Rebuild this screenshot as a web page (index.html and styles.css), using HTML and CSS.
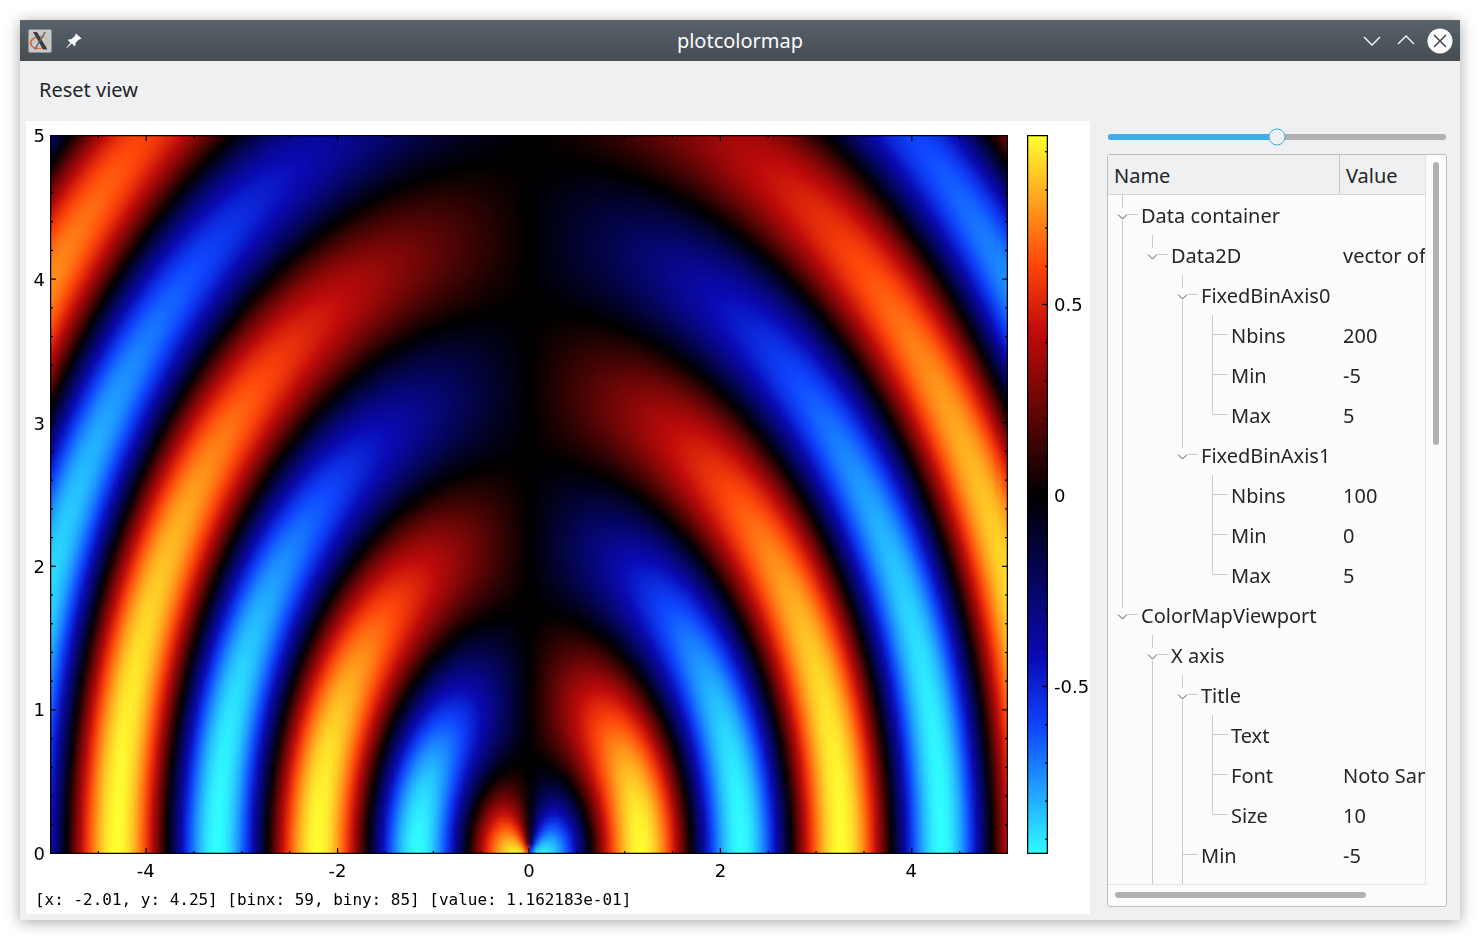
FILE: index.html
```html
<!DOCTYPE html>
<html lang="en">
<head>
<meta charset="utf-8">
<title>plotcolormap</title>
<link rel="stylesheet" href="styles.css">
</head>
<body>
<div class="window">
  <header class="titlebar">
    <div class="title-left">
      <div class="app-icon">
        <svg width="24" height="24" viewBox="0 0 24 24">
          <defs>
            <linearGradient id="ring" x1="0" x2="1" y1="0" y2="0">
              <stop offset="0" stop-color="#e2571a"/>
              <stop offset="0.6" stop-color="#e8853a"/>
              <stop offset="1" stop-color="#d9c49a"/>
            </linearGradient>
          </defs>
          <ellipse cx="11.500" cy="13.500" rx="9" ry="6" fill="none" stroke="url(#ring)" stroke-width="1.500" transform="rotate(-8 11.500 13.500)"/>
          <path d="M5 3h4L19.500 20.500h-4.500z" fill="#3a3f43"/>
          <path d="M16.500 3h1.500L7.500 20.500H6z" fill="#5a5f63"/>
        </svg>
      </div>
      <svg class="pin-icon" width="18" height="18" viewBox="0 0 18 18">
        <path d="M11 1.500l5.500 5-2 1-1 .2-3 3.200.1 2.400-1.200 1-2.600-2.700L2 16l-.5-.5 4-4.700-2.600-2.500 1-1.100 2.400.1 3.400-3 .4-1z" fill="#fcfcfc"/>
      </svg>
    </div>
    <div class="title-text">plotcolormap</div>
    <div class="title-right">
      <svg class="win-btn" width="18" height="18" viewBox="0 0 18 18"><path d="M1 5l8 8 8-8" fill="none" stroke="#fcfcfc" stroke-width="1.300"/></svg>
      <svg class="win-btn" width="18" height="18" viewBox="0 0 18 18"><path d="M1 12l8-8 8 8" fill="none" stroke="#fcfcfc" stroke-width="1.300"/></svg>
      <svg class="close-btn" width="26" height="26" viewBox="0 0 26 26"><circle cx="13" cy="13" r="12.500" fill="#fcfcfc"/><path d="M7 7l12 12M19 7L7 19" stroke="#3c4247" stroke-width="1.500"/></svg>
    </div>
  </header>

  <div class="toolbar">Reset view</div>

  <main class="content">
    <section class="plot-panel">
      <div class="plot-grid">
        <div class="y-labels">
          <span class="y-label" style="top:0%">5</span>
          <span class="y-label" style="top:20%">4</span>
          <span class="y-label" style="top:40%">3</span>
          <span class="y-label" style="top:60%">2</span>
          <span class="y-label" style="top:79.9%">1</span>
          <span class="y-label" style="top:99.9%">0</span>
        </div>
        <canvas id="heatmap" class="heatmap" width="958" height="719"></canvas>
        <div class="bar-gap"></div>
        <div class="colorbar-wrap">
          <canvas id="colorbar" class="colorbar" width="21" height="719"></canvas>
          <span class="bar-label" style="top:23.5%">0.5</span>
          <span class="bar-label" style="top:50.1%">0</span>
          <span class="bar-label" style="top:76.6%">-0.5</span>
        </div>
        <div class="x-labels">
          <span class="x-label" style="left:10%">-4</span>
          <span class="x-label" style="left:30%">-2</span>
          <span class="x-label" style="left:50%">0</span>
          <span class="x-label" style="left:70%">2</span>
          <span class="x-label" style="left:89.9%">4</span>
        </div>
      </div>
      <div class="status">[x: -2.01, y: 4.25] [binx: 59, biny: 85] [value: 1.162183e-01]</div>
    </section>

    <aside class="side-panel">
      <div class="slider">
        <div class="slider-track">
          <div class="slider-fill"></div>
          <div class="slider-thumb"></div>
        </div>
      </div>
      <div class="tree-frame">
        <div class="tree-view">
          <div class="tree-header">
            <div class="head-name">Name</div>
            <div class="head-value">Value</div>
          </div>
          <div class="tree-body">
            <svg class="guides" width="318" height="690" viewBox="1108 195 318 690">
              <path class="guide" d="M1122.500 195V208M1122.500 220V608M1128 214.500H1138M1128 614.500H1138
                M1152.500 235V248M1158 254.500H1168M1152.500 635V648M1152.500 660V885M1158 654.500H1168
                M1182.500 275V288M1182.500 300V448M1188 294.500H1198M1188 454.500H1198M1182.500 675V688M1182.500 700V885M1188 694.500H1198M1183 854.500H1198
                M1212.500 315V414.500M1213 334.500H1228M1213 374.500H1228M1213 414.500H1228
                M1212.500 475V574.500M1213 494.500H1228M1213 534.500H1228M1213 574.500H1228
                M1212.500 715V814.500M1213 734.500H1228M1213 774.500H1228M1213 814.500H1228"/>
              <path class="chevron" d="M1118 214.500l4.500 4.500 4.500-4.500M1118 614.500l4.500 4.500 4.500-4.500M1148 254.500l4.500 4.500 4.500-4.500M1148 654.500l4.500 4.500 4.500-4.500M1178 294.500l4.500 4.500 4.500-4.500M1178 454.500l4.500 4.500 4.500-4.500M1178 694.500l4.500 4.500 4.500-4.500"/>
            </svg>
            <div class="row d0"><div class="cell-name">Data container</div><div class="cell-value"></div></div>
            <div class="row d1"><div class="cell-name">Data2D</div><div class="cell-value">vector of double</div></div>
            <div class="row d2"><div class="cell-name">FixedBinAxis0</div><div class="cell-value"></div></div>
            <div class="row d3"><div class="cell-name">Nbins</div><div class="cell-value">200</div></div>
            <div class="row d3"><div class="cell-name">Min</div><div class="cell-value">-5</div></div>
            <div class="row d3"><div class="cell-name">Max</div><div class="cell-value">5</div></div>
            <div class="row d2"><div class="cell-name">FixedBinAxis1</div><div class="cell-value"></div></div>
            <div class="row d3"><div class="cell-name">Nbins</div><div class="cell-value">100</div></div>
            <div class="row d3"><div class="cell-name">Min</div><div class="cell-value">0</div></div>
            <div class="row d3"><div class="cell-name">Max</div><div class="cell-value">5</div></div>
            <div class="row d0"><div class="cell-name">ColorMapViewport</div><div class="cell-value"></div></div>
            <div class="row d1"><div class="cell-name">X axis</div><div class="cell-value"></div></div>
            <div class="row d2"><div class="cell-name">Title</div><div class="cell-value"></div></div>
            <div class="row d3"><div class="cell-name">Text</div><div class="cell-value"></div></div>
            <div class="row d3"><div class="cell-name">Font</div><div class="cell-value">Noto Sans,10</div></div>
            <div class="row d3"><div class="cell-name">Size</div><div class="cell-value">10</div></div>
            <div class="row d2"><div class="cell-name">Min</div><div class="cell-value">-5</div></div>
          </div>
        </div>
        <div class="vscroll"><div class="vscroll-thumb"></div></div>
        <div class="hscroll"><div class="hscroll-thumb"></div></div>
        <div class="corner"></div>
      </div>
    </aside>
  </main>
</div>
<script src="plot.js"></script>
</body>
</html>
```

FILE: styles.css
```css
* { box-sizing: border-box; }
html, body { margin: 0; height: 100%; }
body {
  background: #fff;
  font-family: "Noto Sans", sans-serif;
  font-size: 20px;
  color: #232629;
  padding: 20px;
}
.window {
  width: 1440px;
  height: 900px;
  background: #eff0f1;
  display: flex;
  flex-direction: column;
  box-shadow: 0 2px 14px rgba(0, 0, 0, 0.35);
}
.titlebar {
  height: 41px;
  flex: none;
  display: grid;
  grid-template-columns: 1fr auto 1fr;
  align-items: center;
  background: linear-gradient(#58626a, #454d53);
  color: #fcfcfc;
}
.title-left { display: flex; align-items: center; padding-left: 8px; gap: 13px; }
.app-icon {
  width: 24px;
  height: 24px;
  background: #c6cacb;
  border: 1px solid #8b9298;
  border-radius: 2px;
  display: flex;
  align-items: center;
  justify-content: center;
}
.app-icon svg { flex: none; }
.pin-icon { display: block; }
.title-text { font-size: 20px; line-height: 41px; }
.title-right { display: flex; align-items: center; justify-content: flex-end; padding-right: 7px; gap: 16px; }
.win-btn { display: block; }
.close-btn { display: block; margin-left: -4px; }

.toolbar {
  height: 60px;
  flex: none;
  padding-left: 19px;
  line-height: 58px;
}

.content { flex: 1; display: flex; min-height: 0; }
.plot-panel {
  width: 1064px;
  height: 793px;
  margin-left: 6px;
  background: #fff;
  padding-top: 14px;
}
.plot-grid {
  display: grid;
  grid-template-columns: 24px 958px 19px 21px;
  grid-template-rows: 719px 36px;
}
.heatmap, .colorbar { display: block; }
.y-labels, .x-labels, .colorbar-wrap { position: relative; }
.y-label, .x-label, .bar-label {
  position: absolute;
  font-family: "DejaVu Sans", sans-serif;
  font-size: 18px;
  line-height: 22px;
  color: #000;
}
.y-label { right: 5px; transform: translateY(calc(-50% + 1px)); }
.x-labels { grid-column: 2; grid-row: 2; }
.x-label { top: 6px; transform: translateX(-50%); }
.bar-label { left: 27px; transform: translateY(calc(-50% + 1px)); white-space: nowrap; }
.status {
  padding-left: 9px;
  padding-top: 1px;
  font-family: "DejaVu Sans Mono", monospace;
  font-size: 16px;
  letter-spacing: -0.015px;
  line-height: 18px;
  color: #000;
}

.side-panel { width: 340px; margin-left: 17px; display: flex; flex-direction: column; }
.slider { height: 33px; flex: none; padding: 0 1px 0 1px; display: flex; align-items: center; }
.slider-track {
  position: relative;
  width: 100%;
  height: 6px;
  margin-bottom: 1px;
  border-radius: 3px;
  background: #b0b1b2;
}
.slider-fill { width: 50%; height: 100%; border-radius: 3px 0 0 3px; background: #3daee9; }
.slider-thumb {
  position: absolute;
  left: 50%;
  top: 50%;
  width: 17px;
  height: 17px;
  transform: translate(-50%, -50%);
  border-radius: 50%;
  background: #eff0f1;
  border: 1px solid #3daee9;
}
.tree-frame {
  width: 340px;
  height: 753px;
  display: grid;
  grid-template-columns: 318px 20px;
  grid-template-rows: 730px 21px;
  background: #fcfcfc;
  border: 1px solid #bcbebf;
  border-radius: 3px;
}
.tree-view {
  display: flex;
  flex-direction: column;
  overflow: hidden;
  border-right: 1px solid #e3e4e5;
  border-bottom: 1px solid #e3e4e5;
}
.tree-header {
  display: flex;
  flex: none;
  height: 40px;
  background: #eff0f1;
  border-bottom: 1px solid #d5d6d7;
}
.head-name { width: 232px; padding-left: 6px; line-height: 42px; border-right: 1px solid #c6c8c9; }
.head-value { flex: 1; padding-left: 6px; line-height: 42px; }
.tree-body { position: relative; flex: 1; overflow: hidden; }
.guides { position: absolute; left: 0; top: 0; }
.guide { fill: none; stroke: #c9cacb; stroke-width: 1; }
.chevron { fill: none; stroke: #4d5154; stroke-width: 1; }
.row { display: flex; height: 40px; line-height: 42px; white-space: nowrap; }
.cell-name { width: 235px; flex: none; }
.d0 .cell-name { padding-left: 33px; }
.d1 .cell-name { padding-left: 63px; }
.d2 .cell-name { padding-left: 93px; }
.d3 .cell-name { padding-left: 123px; }
.cell-value { flex: 1; overflow: hidden; }
.vscroll { position: relative; }
.vscroll-thumb {
  position: absolute;
  left: 7px;
  top: 7px;
  width: 6px;
  height: 283px;
  border-radius: 3px;
  background: #b0b1b2;
}
.hscroll { position: relative; }
.hscroll-thumb {
  position: absolute;
  left: 7px;
  top: 7px;
  width: 251px;
  height: 6px;
  border-radius: 3px;
  background: #b0b1b2;
}
```

FILE: plot.js
```js
var STOPS_POS = [[0, 0, 0, 0], [0.45, 190, 10, 10], [0.64, 255, 70, 10], [1, 255, 255, 50]];
var STOPS_NEG = [[0, 0, 0, 0], [0.45, 10, 10, 180], [0.64, 15, 70, 255], [1, 50, 255, 255]];
var RANGE = 0.9428;

function colour(v) {
  var t = Math.min(1, Math.abs(v) / RANGE);
  var stops = v >= 0 ? STOPS_POS : STOPS_NEG;
  for (var i = 1; i < stops.length; i++) {
    if (t <= stops[i][0]) {
      var a = stops[i - 1], b = stops[i];
      var f = (t - a[0]) / (b[0] - a[0]);
      return [a[1] + (b[1] - a[1]) * f, a[2] + (b[2] - a[2]) * f, a[3] + (b[3] - a[3]) * f];
    }
  }
  return stops[stops.length - 1].slice(1);
}

function field(x, y) {
  var r = 3 * Math.sqrt(x * x + y * y) + 1e-2;
  return 2 * x * (Math.cos(r + 2) / r - Math.sin(r + 2) / r);
}

function fillBins(w, h, fn) {
  var c = document.createElement("canvas");
  c.width = w;
  c.height = h;
  var g = c.getContext("2d");
  var img = g.createImageData(w, h);
  for (var j = 0; j < h; j++) {
    for (var i = 0; i < w; i++) {
      var col = colour(fn(i, j));
      var k = 4 * (i + j * w);
      img.data[k] = col[0];
      img.data[k + 1] = col[1];
      img.data[k + 2] = col[2];
      img.data[k + 3] = 255;
    }
  }
  g.putImageData(img, 0, 0);
  return c;
}

function tick(g, x0, y0, x1, y1) {
  g.beginPath();
  g.moveTo(x0, y0);
  g.lineTo(x1, y1);
  g.stroke();
}

function drawPlot() {
  var canvas = document.getElementById("heatmap");
  var g = canvas.getContext("2d");
  var W = 957, H = 718;
  var bins = fillBins(200, 100, function (i, j) {
    return field(-5 + (i + 0.5) * 0.05, (99 - j + 0.5) * 0.05);
  });
  g.imageSmoothingEnabled = true;
  g.imageSmoothingQuality = "low";
  g.drawImage(bins, 0, 0, W + 1, H + 1);
  g.strokeStyle = "#000";
  g.lineWidth = 1.5;
  g.strokeRect(0.5, 0.5, W, H);
  g.lineWidth = 1.2;
  for (var n = -9; n <= 9; n++) {
    var x = 0.5 + (n + 10) / 20 * W;
    var len = n % 4 === 0 ? 6 : 3;
    tick(g, x, 0, x, len);
    tick(g, x, H + 1, x, H + 1 - len);
  }
  for (var m = 1; m < 25; m++) {
    var y = 0.5 + m / 25 * H;
    var l = m % 5 === 0 ? 6 : 3;
    tick(g, 0, y, l, y);
    tick(g, W + 1, y, W + 1 - l, y);
  }
}

function drawBar() {
  var canvas = document.getElementById("colorbar");
  var g = canvas.getContext("2d");
  var H = 718;
  var bins = fillBins(1, H, function (i, j) {
    return 0.9425 - (j / H) * (0.9425 + 0.9373);
  });
  g.imageSmoothingEnabled = false;
  g.drawImage(bins, 0, 0, 21, H + 1);
  g.strokeStyle = "#000";
  g.lineWidth = 1.5;
  g.strokeRect(0.5, 0.5, 20, H);
  g.lineWidth = 1.2;
  for (var n = -9; n <= 9; n++) {
    var y = 360.5 - n * 38.2;
    var l = n % 5 === 0 ? 6 : 3;
    tick(g, 21, y, 21 - l, y);
  }
}

drawPlot();
drawBar();
```
